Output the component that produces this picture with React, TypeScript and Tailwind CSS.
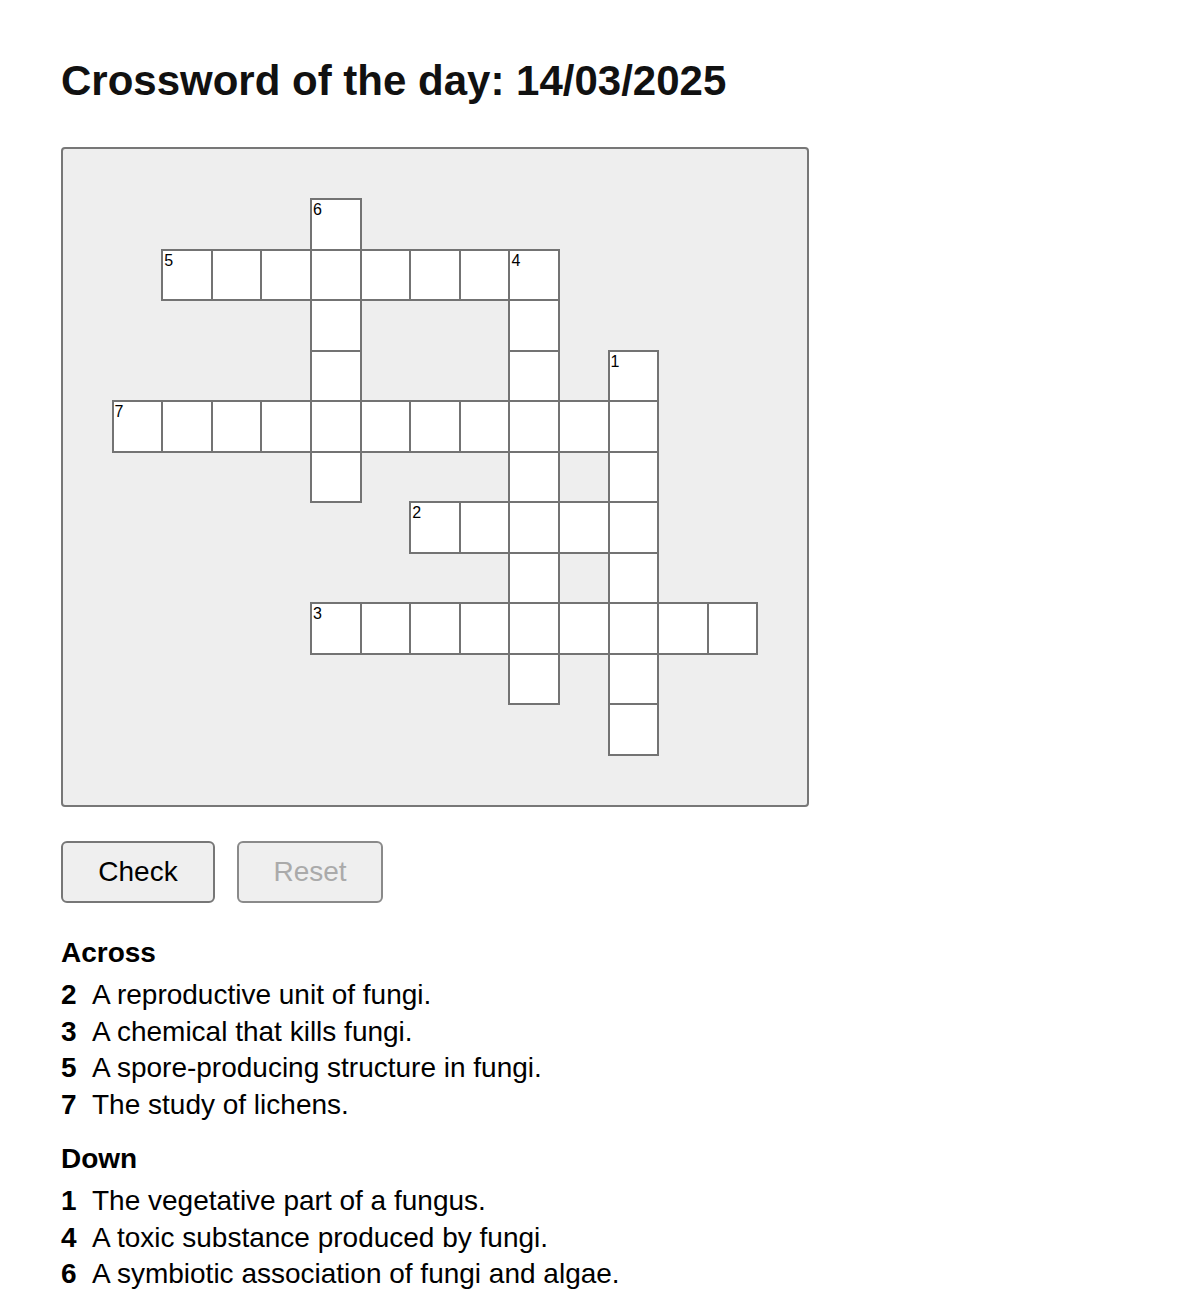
import React from "react";

type Word = { n: number; dir: "across" | "down"; col: number; row: number; len: number };

// Grid coordinates are 1-based within a 15 x 13 board (one empty ring around the words).
const words: Word[] = [
  { n: 1, dir: "down", col: 12, row: 5, len: 8 },
  { n: 2, dir: "across", col: 8, row: 8, len: 5 },
  { n: 3, dir: "across", col: 6, row: 10, len: 9 },
  { n: 4, dir: "down", col: 10, row: 3, len: 9 },
  { n: 5, dir: "across", col: 3, row: 3, len: 8 },
  { n: 6, dir: "down", col: 6, row: 2, len: 6 },
  { n: 7, dir: "across", col: 2, row: 6, len: 11 },
];

const across = [
  { n: 2, text: "A reproductive unit of fungi." },
  { n: 3, text: "A chemical that kills fungi." },
  { n: 5, text: "A spore-producing structure in fungi." },
  { n: 7, text: "The study of lichens." },
];

const down = [
  { n: 1, text: "The vegetative part of a fungus." },
  { n: 4, text: "A toxic substance produced by fungi." },
  { n: 6, text: "A symbiotic association of fungi and algae." },
];

function buildCells() {
  const map = new Map<string, { col: number; row: number; label?: number }>();
  for (const w of words) {
    for (let i = 0; i < w.len; i++) {
      const col = w.dir === "across" ? w.col + i : w.col;
      const row = w.dir === "down" ? w.row + i : w.row;
      const key = `${col}-${row}`;
      if (!map.has(key)) map.set(key, { col, row });
    }
    const start = map.get(`${w.col}-${w.row}`)!;
    start.label = w.n;
  }
  return Array.from(map.values());
}

function ClueList({ title, clues }: { title: string; clues: { n: number; text: string }[] }) {
  return (
    <div>
      <h2 className="text-[28px] font-bold leading-[36px]">{title}</h2>
      <ul className="mt-[6px]">
        {clues.map((c) => (
          <li key={c.n} className="flex text-[28px] leading-[36.5px]">
            <span className="w-[31px] shrink-0 font-bold">{c.n}</span>
            <span>{c.text}</span>
          </li>
        ))}
      </ul>
    </div>
  );
}

export default function App() {
  const cells = buildCells();
  return (
    <div
      className="min-h-[1314px] bg-white px-[61px] pt-[57px] text-black"
      style={{ fontFamily: '"Liberation Sans", Arial, Helvetica, sans-serif' }}
    >
      <h1 className="text-[42px] font-bold leading-[48px] text-[#111]">Crossword of the day: 14/03/2025</h1>

      <div className="mt-[42px] grid h-[660px] w-[748px] grid-cols-[repeat(15,1fr)] grid-rows-[repeat(13,1fr)] rounded-[4px] border-2 border-[#777] bg-[#eeeeee]">
        {cells.map((c) => (
          <div
            key={`${c.col}-${c.row}`}
            className="relative -m-px border-2 border-[#737373] bg-white"
            style={{ gridColumn: c.col, gridRow: c.row }}
          >
            {c.label !== undefined && (
              <span className="absolute left-px top-[2px] text-[16px] leading-none text-black">{c.label}</span>
            )}
          </div>
        ))}
      </div>

      <div className="mt-[34px] flex gap-[22px]">
        <button className="h-[62px] w-[154px] rounded-[6px] border-2 border-[#777] bg-[#efefef] text-[28px] text-black">
          Check
        </button>
        <button
          disabled
          className="h-[62px] w-[146px] rounded-[6px] border-2 border-[#8a8a8a] bg-[#efefef] text-[28px] text-[#aaa]"
        >
          Reset
        </button>
      </div>

      <div className="mt-[32px]">
        <ClueList title="Across" clues={across} />
      </div>
      <div className="mt-[18px]">
        <ClueList title="Down" clues={down} />
      </div>
    </div>
  );
}
